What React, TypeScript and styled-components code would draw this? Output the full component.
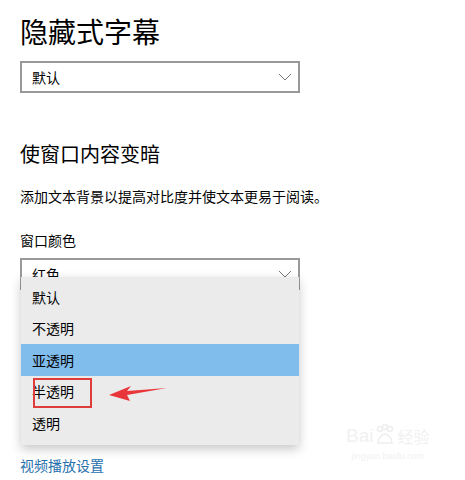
import styled, { createGlobalStyle } from 'styled-components';

const GlobalStyle = createGlobalStyle`
  html, body {
    margin: 0;
    padding: 0;
    background: #ffffff;
  }
  body {
    font-family: "Noto Sans CJK SC", "Noto Sans", sans-serif;
    color: #000000;
  }
`;

const Page = styled.div`
  position: relative;
  width: 465px;
  height: 480px;
  overflow: hidden;
  padding: 15px 0 0 20px;
  box-sizing: border-box;
`;

const Title = styled.h1`
  margin: 0;
  font-size: 28px;
  line-height: 32px;
  font-weight: 400;
`;

const SelectBox = styled.div<{ $top: number }>`
  display: flex;
  align-items: center;
  justify-content: space-between;
  width: 280px;
  height: 32px;
  margin-top: ${(p) => p.$top}px;
  box-sizing: border-box;
  border: 2px solid #999999;
  padding: 0 6px 0 10px;
  font-size: 14px;
  line-height: 20px;
`;

const Chevron = () => (
  <svg width="14" height="8" viewBox="0 0 14 8">
    <path d="M1 1 L7 7 L13 1" fill="none" stroke="#777" strokeWidth="1" />
  </svg>
);

const Heading = styled.h2`
  margin: 49px 0 0;
  font-size: 20px;
  line-height: 24px;
  font-weight: 400;
`;

const Text = styled.p<{ $top: number }>`
  margin: ${(p) => p.$top}px 0 0;
  font-size: 14px;
  line-height: 20px;
`;

const Link = styled.a`
  display: block;
  margin-top: 165px;
  font-size: 14px;
  line-height: 20px;
  color: #2670ad;
  text-decoration: none;
`;

const Menu = styled.ul`
  position: absolute;
  left: 21px;
  top: 277px;
  width: 278px;
  margin: 0;
  padding: 4px 0 6px;
  list-style: none;
  background: #ebebeb;
  box-shadow: 0 4px 10px rgba(0, 0, 0, 0.22);
`;

const MenuItem = styled.li<{ $active?: boolean }>`
  height: 31.5px;
  display: flex;
  align-items: center;
  padding-left: 11px;
  font-size: 14px;
  background: ${(p) => (p.$active ? '#80bcec' : 'transparent')};
`;

const Mark = styled.div`
  position: absolute;
  left: 33px;
  top: 378px;
  width: 59px;
  height: 30px;
  box-sizing: border-box;
  border: 2px solid #e03c3c;
`;

const Arrow = styled.svg`
  position: absolute;
  left: 105px;
  top: 382px;
`;

const Watermark = styled.div`
  position: absolute;
  left: 346px;
  top: 424px;
  display: flex;
  flex-direction: column;
  align-items: center;
  color: #f1f1f1;
  font-family: "Liberation Sans", sans-serif;
`;

const WatermarkRow = styled.div`
  display: flex;
  align-items: flex-end;
  gap: 2px;
  font-size: 19px;
  line-height: 20px;
`;

const WatermarkCn = styled.span`
  font-family: "Noto Sans CJK SC", sans-serif;
  font-size: 16px;
`;

const WatermarkUrl = styled.div`
  font-size: 9px;
  line-height: 12px;
  margin-top: 4px;
`;

const items = ['默认', '不透明', '亚透明', '半透明', '透明'];

export default function App() {
  return (
    <>
      <GlobalStyle />
      <Page>
        <Title>隐藏式字幕</Title>
        <SelectBox $top={14}>
          <span>默认</span>
          <Chevron />
        </SelectBox>
        <Heading>使窗口内容变暗</Heading>
        <Text $top={20}>添加文本背景以提高对比度并使文本更易于阅读。</Text>
        <Text $top={24}>窗口颜色</Text>
        <SelectBox $top={8}>
          <span>红色</span>
          <Chevron />
        </SelectBox>
        <Link href="#">视频播放设置</Link>

        <Menu>
          {items.map((it) => (
            <MenuItem key={it} $active={it === '亚透明'}>
              {it}
            </MenuItem>
          ))}
        </Menu>
        <Mark />
        <Arrow width="66" height="22" viewBox="0 0 66 22">
          <path d="M4 13 L26 4 L22 9 L62 6 L22 13 L25 19 Z" fill="#e8363a" />
        </Arrow>

        <Watermark>
          <WatermarkRow>
            <span>Bai</span>
            <svg width="20" height="22" viewBox="0 0 20 22">
              <g fill="none" stroke="#eeeeee" strokeWidth="1.5">
                <circle cx="5" cy="5" r="2.5" />
                <circle cx="10" cy="3" r="2.5" />
                <circle cx="15" cy="5" r="2.5" />
                <path d="M3 19 C3 13 8 10 10 10 C12 10 17 13 17 19 Z" />
              </g>
            </svg>
            <WatermarkCn>经验</WatermarkCn>
          </WatermarkRow>
          <WatermarkUrl>jingyan.baidu.com</WatermarkUrl>
        </Watermark>
      </Page>
    </>
  );
}
